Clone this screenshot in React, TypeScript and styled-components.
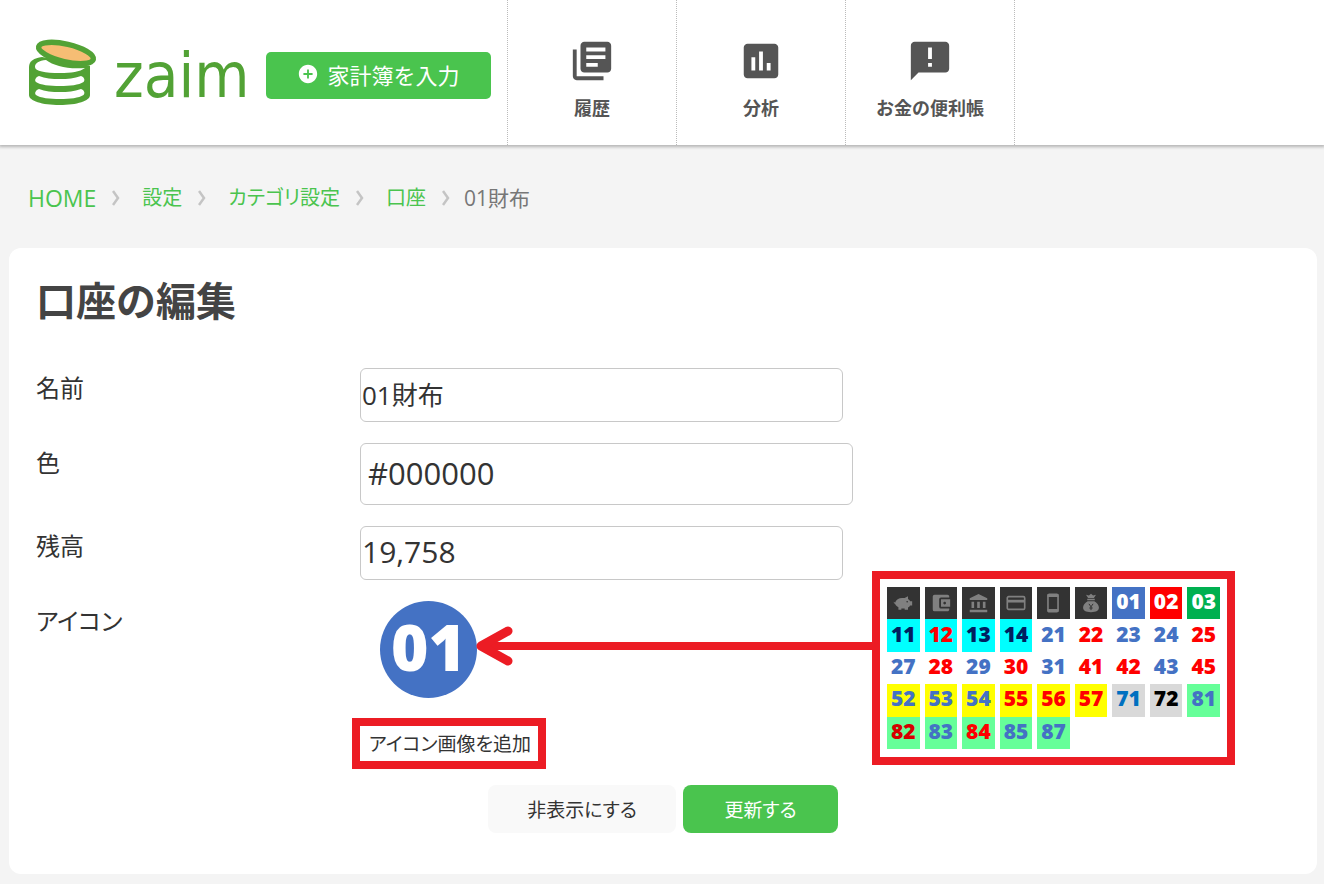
import React from 'react';
import styled, { createGlobalStyle } from 'styled-components';
import {
  MdAccountBalance,
  MdAccountBalanceWallet,
  MdAddCircle,
  MdAnnouncement,
  MdInsertChart,
  MdLibraryBooks,
} from 'react-icons/md';

const GREEN = '#4ac44e';
const RED = '#ec1c24';

const GlobalStyle = createGlobalStyle`
  *, *::before, *::after { box-sizing: border-box; }
  body {
    margin: 0;
    background: #f4f4f4;
    color: #333;
    font-family: "Open Sans", "Noto Sans CJK JP", sans-serif;
    font-feature-settings: "palt";
  }
  button, input { font: inherit; color: inherit; font-feature-settings: inherit; }
`;

const Header = styled.header`
  display: flex;
  height: 145px;
  background: #fff;
  box-shadow: 0 1px 3px 1px rgba(0, 0, 0, 0.26);
`;

const Brand = styled.div`
  display: flex;
  align-items: center;
  flex: 0 0 508px;
  padding: 0 16px 0 28px;
  border-right: 1px dotted #bbb;
`;

const Logo = styled.a`
  display: flex;
  align-items: center;
  flex: 1;
  gap: 16px;
  color: #52a235;
  text-decoration: none;
`;

const WordMark = styled.span`
  padding-top: 6px;
  font-family: "DejaVu Sans Condensed", "DejaVu Sans", sans-serif;
  font-size: 63px;
  line-height: 62px;
`;

const EntryButton = styled.button`
  display: flex;
  align-items: center;
  justify-content: center;
  gap: 8px;
  width: 225px;
  height: 47px;
  margin-top: 6px;
  padding: 0 0 4px;
  border: 0;
  border-radius: 5px;
  background: ${GREEN};
  color: #fff;
  font-size: 22px;
  font-feature-settings: normal;
`;

const Nav = styled.nav`
  display: flex;
`;

const NavLink = styled.a`
  display: flex;
  flex-direction: column;
  align-items: center;
  gap: 14px;
  width: 169px;
  padding-top: 38px;
  border-right: 1px dotted #bbb;
  color: #555;
  font-size: 18px;
  font-weight: 600;
  font-feature-settings: normal;
  line-height: 20px;
  text-decoration: none;
`;

const Breadcrumbs = styled.ol`
  display: flex;
  align-items: center;
  height: 103px;
  margin: 0;
  padding: 2px 28px 0;
  list-style: none;
  color: #777;
  font-size: 20px;
`;

const Crumb = styled.li<{ $size?: number }>`
  display: flex;
  align-items: center;
  font-size: ${(p) => p.$size ?? 20}px;
  line-height: 28px;

  a {
    color: ${GREEN};
    text-decoration: none;
  }
  svg {
    margin: 0 22px 0 16px;
  }
  &:nth-last-child(2) svg {
    margin-right: 14px;
  }
`;

const Card = styled.main`
  margin: 0 7px 10px 9px;
  padding: 28px 27px 41px;
  border-radius: 12px;
  background: #fff;
`;

const Title = styled.h1`
  margin: 0 0 42px;
  color: #444;
  font-size: 40px;
  font-weight: 600;
  font-feature-settings: normal;
  line-height: 50px;
`;

const Form = styled.form`
  display: flex;
  flex-direction: column;
`;

const Row = styled.div`
  display: grid;
  grid-template-columns: 324px 1fr;
  align-items: start;
  margin-bottom: 21px;
`;

const IconRow = styled(Row)`
  margin-bottom: 20px;
`;

const Label = styled.label`
  padding-top: 4px;
  font-size: 24px;
  line-height: 32px;
`;

const Field = styled.input<{ $wide?: boolean }>`
  width: 100%;
  max-width: ${(p) => (p.$wide ? 493 : 483)}px;
  height: ${(p) => (p.$wide ? 62 : 54)}px;
  padding: 0 ${(p) => (p.$wide ? 7 : 1)}px 3px;
  border: 1px solid #c8c8c8;
  border-radius: 6px;
  background: #fff;
  font-size: ${(p) => (p.$wide ? 31 : 30)}px;
`;

const NameField = styled(Field)`
  font-size: 26px;
`;

const IconArea = styled.div`
  position: relative;
  padding-left: 20px;
`;

const AccountIcon = styled.div`
  display: flex;
  align-items: center;
  justify-content: center;
  width: 97px;
  height: 97px;
  padding-bottom: 6px;
  border-radius: 50%;
  background: #4472c4;
  color: #fff;
  font-family: "Open Sans", sans-serif;
  font-size: 64px;
  font-weight: 800;
`;

const Annotation = styled.div`
  position: absolute;
  top: -30px;
  left: 116px;
  display: flex;
  align-items: center;
`;

const Arrow = styled.svg`
  display: block;
  margin-top: -44px;
`;

const Palette = styled.div`
  display: grid;
  grid-template-columns: repeat(9, 1fr);
  grid-auto-rows: 1fr;
  column-gap: 5px;
  width: 363px;
  height: 194px;
  padding: 8px 7px;
  border: 8px solid ${RED};
  background: #fff;
`;

const Swatch = styled.span<{ $bg?: string; $fg: string }>`
  display: flex;
  align-items: center;
  justify-content: center;
  background: ${(p) => p.$bg ?? 'transparent'};
  color: ${(p) => p.$fg};
  font-family: "Open Sans", sans-serif;
  font-size: 21px;
  font-weight: 800;
  line-height: 28px;
`;

const NumberSwatch = styled(Swatch)`
  padding-bottom: 4px;
`;

const AddIconButton = styled.button`
  align-self: flex-start;
  height: 51px;
  margin-left: 316px;
  padding: 0 7px 0 9px;
  border: 8px solid ${RED};
  background: #fff;
  font-size: 19px;
  line-height: 30px;
`;

const Actions = styled.div`
  display: flex;
  gap: 7px;
  margin: 16px 0 0 452px;
`;

const ActionButton = styled.button<{ $primary?: boolean }>`
  width: ${(p) => (p.$primary ? 155 : 188)}px;
  height: 48px;
  padding: 0;
  border: 0;
  border-radius: 8px;
  background: ${(p) => (p.$primary ? GREEN : '#f9f9f9')};
  color: ${(p) => (p.$primary ? '#fff' : '#333')};
  font-size: 19px;
`;

const Coins = () => (
  <svg width="70" height="68" viewBox="0 0 70 68" aria-hidden="true">
    <path d="M1 28C1 22 6 19 14 18L62 27V56C62 62 49 66 31.500 66S1 62 1 56Z" fill="#52a235" />
    <g fill="#fff">
      <path d="M7 28C7 24 11 21.500 18 21C26 27 40 30.500 57 29C52 33 43 34 32 34C17 34 7 32 7 28Z" />
      <path id="coin-gap" d="M11 37C17 39.500 24 40 32 40S46 39.500 53 37C56 38 57.500 41 55.500 43C51 46 42 47 32 47S12 46 8 43C6 41 8 38 11 37Z" />
      <use href="#coin-gap" y="13" />
    </g>
    <ellipse cx="38" cy="14" rx="28" ry="8.800" transform="rotate(13 38 14)" fill="#f6bd74" stroke="#52a235" strokeWidth="5.500" />
  </svg>
);

const Chevron = () => (
  <svg width="8" height="16" viewBox="0 0 8 16" fill="none" stroke="#c4c4c4" strokeWidth="2.500" aria-hidden="true">
    <path d="M1 1l5 7-5 7" />
  </svg>
);

const PiggyIcon = () => (
  <svg width="20" height="20" viewBox="0 0 24 24" fill="currentColor" aria-label="貯金箱">
    <path d="M1 10.500l1.500 1.300C3.500 8 7 6 11 6h3l4-2v3.200c1.300.8 2.100 1.800 2.600 2.800H23v5h-2.400c-.6 1-1.500 1.900-2.600 2.500V20h-4v-1.500h-4V20H6.500v-3C4.500 16 3.200 14.800 2.600 13.200L1 12z" />
    <circle cx="17" cy="10.500" r="1" fill="#333" />
  </svg>
);

const CardIcon = () => (
  <svg width="22" height="22" viewBox="0 0 24 24" fill="none" stroke="currentColor" strokeWidth="1.800" aria-label="カード">
    <rect x="2.500" y="5" width="19" height="14" rx="1.500" />
    <path d="M2.500 10h19" strokeWidth="3" />
  </svg>
);

const PhoneIcon = () => (
  <svg width="22" height="22" viewBox="0 0 24 24" fill="none" stroke="currentColor" aria-label="スマートフォン">
    <rect x="6.500" y="2.500" width="11" height="19" rx="1.500" strokeWidth="1.800" />
    <path d="M6 4h12M6 20h12" strokeWidth="3" />
  </svg>
);

const MoneyBagIcon = () => (
  <svg width="20" height="20" viewBox="0 0 24 24" fill="currentColor" aria-label="お金">
    <path d="M6 2l3.500 1L12 1l2.500 2L18 2l-2.500 4h-7zM7.500 7h9v1.800h-9zM8 10h8c3 2 5.500 4.500 5.500 7.500 0 3.500-3 5.500-9.500 5.500s-9.500-2-9.500-5.500C2.500 14.500 5 12 8 10z" />
    <path d="M9.500 13l2.500 3.500 2.500-3.500M12 16v4.500M10 18h4" fill="none" stroke="#333" strokeWidth="1.200" />
  </svg>
);

const BLUE = '#4472c4';
const PURE_RED = '#f00';
const NAVY = '#002060';
const CYAN = '#0ff';
const YELLOW = '#ff0';
const MINT = '#66ff99';
const GREY = '#d9d9d9';

const pictograms = [
  <PiggyIcon />,
  <MdAccountBalanceWallet size={22} />,
  <MdAccountBalance size={21} />,
  <CardIcon />,
  <PhoneIcon />,
  <MoneyBagIcon />,
];

const numbers: [string, string, string?][] = [
  ['01', '#fff', BLUE], ['02', '#fff', PURE_RED], ['03', '#fff', '#00b050'],
  ['11', NAVY, CYAN], ['12', PURE_RED, CYAN], ['13', NAVY, CYAN], ['14', NAVY, CYAN],
  ['21', BLUE], ['22', PURE_RED], ['23', BLUE], ['24', BLUE], ['25', PURE_RED],
  ['27', BLUE], ['28', PURE_RED], ['29', BLUE], ['30', PURE_RED], ['31', BLUE],
  ['41', PURE_RED], ['42', PURE_RED], ['43', BLUE], ['45', PURE_RED],
  ['52', BLUE, YELLOW], ['53', BLUE, YELLOW], ['54', BLUE, YELLOW],
  ['55', PURE_RED, YELLOW], ['56', PURE_RED, YELLOW], ['57', PURE_RED, YELLOW],
  ['71', '#0070c0', GREY], ['72', '#000', GREY], ['81', BLUE, MINT],
  ['82', '#d60000', MINT], ['83', BLUE, MINT], ['84', PURE_RED, MINT], ['85', BLUE, MINT], ['87', BLUE, MINT],
];

export default function App() {
  return (
    <>
      <GlobalStyle />
      <Header>
        <Brand>
          <Logo href="#">
            <Coins />
            <WordMark>zaim</WordMark>
          </Logo>
          <EntryButton type="button">
            <MdAddCircle size={22} />
            家計簿を入力
          </EntryButton>
        </Brand>
        <Nav>
          <NavLink href="#">
            <MdLibraryBooks size={46} />
            履歴
          </NavLink>
          <NavLink href="#">
            <MdInsertChart size={46} />
            分析
          </NavLink>
          <NavLink href="#">
            <MdAnnouncement size={46} />
            お金の便利帳
          </NavLink>
        </Nav>
      </Header>

      <Breadcrumbs>
        <Crumb $size={23}><a href="#">HOME</a><Chevron /></Crumb>
        <Crumb><a href="#">設定</a><Chevron /></Crumb>
        <Crumb><a href="#">カテゴリ設定</a><Chevron /></Crumb>
        <Crumb><a href="#">口座</a><Chevron /></Crumb>
        <Crumb $size={21} aria-current="page">01財布</Crumb>
      </Breadcrumbs>

      <Card>
        <Title>口座の編集</Title>
        <Form>
          <Row>
            <Label htmlFor="name">名前</Label>
            <NameField id="name" defaultValue="01財布" />
          </Row>
          <Row>
            <Label htmlFor="color">色</Label>
            <Field id="color" $wide defaultValue="#000000" />
          </Row>
          <Row>
            <Label htmlFor="balance">残高</Label>
            <Field id="balance" defaultValue="19,758" />
          </Row>
          <IconRow>
            <Label as="span">アイコン</Label>
            <IconArea>
              <AccountIcon>01</AccountIcon>
              <Annotation>
                <Arrow width="396" height="42" viewBox="0 0 396 42" fill="none" stroke={RED} aria-hidden="true">
                  <path d="M8 21h388" strokeWidth="8" />
                  <path d="M32 6L5 21l27 15" strokeWidth="9" strokeLinecap="round" strokeLinejoin="round" />
                </Arrow>
                <Palette>
                  {pictograms.map((icon, i) => (
                    <Swatch key={i} $fg="#808080" $bg="#333">{icon}</Swatch>
                  ))}
                  {numbers.map(([text, fg, bg]) => (
                    <NumberSwatch key={text} $fg={fg} $bg={bg}>{text}</NumberSwatch>
                  ))}
                </Palette>
              </Annotation>
            </IconArea>
          </IconRow>
          <AddIconButton type="button">アイコン画像を追加</AddIconButton>
          <Actions>
            <ActionButton type="button">非表示にする</ActionButton>
            <ActionButton type="button" $primary>更新する</ActionButton>
          </Actions>
        </Form>
      </Card>
    </>
  );
}
